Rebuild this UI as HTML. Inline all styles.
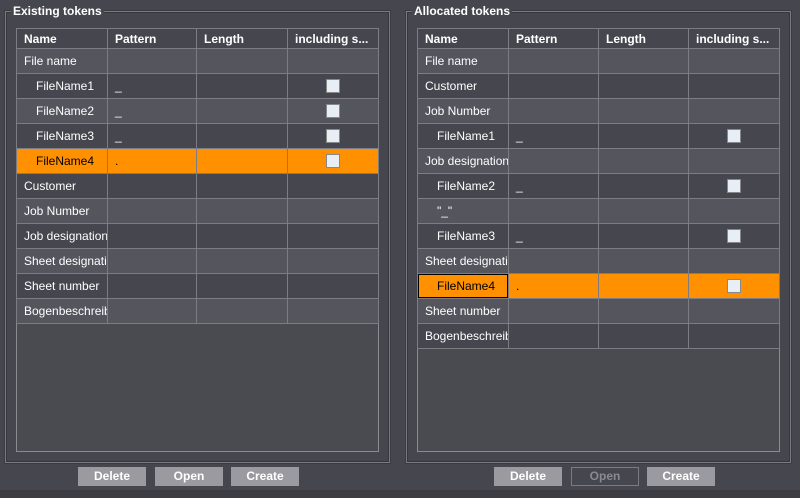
<!DOCTYPE html><html><head><style>
body{margin:0;width:800px;height:498px;background:#46464e;font-family:"Liberation Sans",sans-serif;font-size:12px;color:#fff;position:relative;overflow:hidden}
.grp{position:absolute;top:11px;width:383px;height:450px;border:1px solid #7a7a80;box-shadow:inset 0 0 0 1px #36363c, 0 0 0 1px #3a3a40}
.lbl{position:absolute;top:4px;background:#46464e;font-weight:bold;font-size:12px;padding:0 2px}
table{position:absolute;top:28px;border-collapse:collapse;width:363px;table-layout:fixed}
.tb{position:absolute;top:28px;width:361px;height:422px;border:1px solid #8a8a90;background:#4a4a51}
td,th{border:1px solid #7c7c82;height:24px;padding:0 0 0 7px;white-space:nowrap;overflow:hidden;text-align:left}
th{height:19px;font-weight:bold;background:#46464e}
tr.l td{background:#54555d}tr.d td{background:#46464e}
tr.o td{background:#ff9000;color:#000}
.i{padding-left:19px}
.cb{display:inline-block;width:12px;height:12px;background:#e8eef6;border:1px solid #888;margin-left:31px;vertical-align:middle}
.btn{position:absolute;top:467px;width:68px;height:19px;background:#9a9aa0;color:#fff;font-weight:bold;text-align:center;line-height:19px}
.dis{background:#46464e;border:1px solid #7a7a80;color:#8a8a90;height:17px;line-height:17px;width:66px}
.bot{position:absolute;top:490px;left:0;width:800px;height:8px;background:#3c3c42}
</style></head><body>
<div class="grp" style="left:5px"></div><div class="lbl" style="left:11px">Existing tokens</div>
<div class="grp" style="left:406px"></div><div class="lbl" style="left:412px">Allocated tokens</div>
<div class="tb" style="left:16px"></div><div class="tb" style="left:417px"></div>
<table style="left:16px"><colgroup><col style="width:91px"><col style="width:89px"><col style="width:91px"><col style="width:91px"></colgroup>
<tr><th>Name</th><th>Pattern</th><th>Length</th><th>including s...</th></tr>
<tr class="l"><td>File name</td><td></td><td></td><td></td></tr>
<tr class="d"><td class="i">FileName1</td><td>_</td><td></td><td><span class="cb"></span></td></tr>
<tr class="l"><td class="i">FileName2</td><td>_</td><td></td><td><span class="cb"></span></td></tr>
<tr class="d"><td class="i">FileName3</td><td>_</td><td></td><td><span class="cb"></span></td></tr>
<tr class="o"><td class="i">FileName4</td><td>.</td><td></td><td><span class="cb"></span></td></tr>
<tr class="d"><td>Customer</td><td></td><td></td><td></td></tr>
<tr class="l"><td>Job Number</td><td></td><td></td><td></td></tr>
<tr class="d"><td>Job designation</td><td></td><td></td><td></td></tr>
<tr class="l"><td>Sheet designation</td><td></td><td></td><td></td></tr>
<tr class="d"><td>Sheet number</td><td></td><td></td><td></td></tr>
<tr class="l"><td>Bogenbeschreibung</td><td></td><td></td><td></td></tr>
</table>
<table style="left:417px"><colgroup><col style="width:91px"><col style="width:90px"><col style="width:90px"><col style="width:91px"></colgroup>
<tr><th>Name</th><th>Pattern</th><th>Length</th><th>including s...</th></tr>
<tr class="l"><td>File name</td><td></td><td></td><td></td></tr>
<tr class="d"><td>Customer</td><td></td><td></td><td></td></tr>
<tr class="l"><td>Job Number</td><td></td><td></td><td></td></tr>
<tr class="d"><td class="i">FileName1</td><td>_</td><td></td><td><span class="cb"></span></td></tr>
<tr class="l"><td>Job designation</td><td></td><td></td><td></td></tr>
<tr class="d"><td class="i">FileName2</td><td>_</td><td></td><td><span class="cb"></span></td></tr>
<tr class="l"><td class="i">"_"</td><td></td><td></td><td></td></tr>
<tr class="d"><td class="i">FileName3</td><td>_</td><td></td><td><span class="cb"></span></td></tr>
<tr class="l"><td>Sheet designation</td><td></td><td></td><td></td></tr>
<tr class="o"><td class="i" style="box-shadow:inset 0 0 0 1px #000">FileName4</td><td>.</td><td></td><td><span class="cb"></span></td></tr>
<tr class="l"><td>Sheet number</td><td></td><td></td><td></td></tr>
<tr class="d"><td>Bogenbeschreibung</td><td></td><td></td><td></td></tr>
</table>
<div class="btn" style="left:78px">Delete</div><div class="btn" style="left:155px">Open</div><div class="btn" style="left:231px">Create</div>
<div class="btn" style="left:494px">Delete</div><div class="btn dis" style="left:571px">Open</div><div class="btn" style="left:647px">Create</div>
<div class="bot"></div>
</body></html>
